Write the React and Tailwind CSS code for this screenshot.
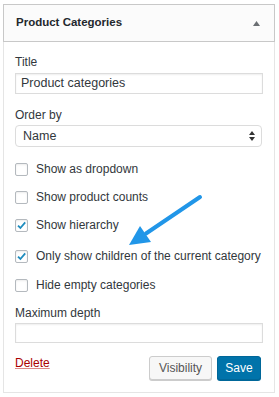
const font = { fontFamily: '"Liberation Sans", Arial, sans-serif' };

function Check({ checked }) {
    return (
        <span className="w-[13px] h-[13px] flex-none flex items-center justify-center border border-[#b4b9be] rounded-[2px] bg-white shadow-[inset_0_1px_2px_rgba(0,0,0,0.08)]">
            {checked && (
                <svg width="11" height="11" viewBox="0 0 11 11">
                    <path d="M2 5.6 L4.4 8 L9.2 2.4" fill="none" stroke="#1e8cbe" strokeWidth="1.8" />
                </svg>
            )}
        </span>
    );
}

function Row({ label, checked, className }) {
    return (
        <label className={"flex items-center gap-[8px] h-[16px] text-[12px] text-[#32373c] " + className}>
            <Check checked={checked} />
            <span>{label}</span>
        </label>
    );
}

export default function App() {
    return (
        <div className="relative w-[279px] h-[397px] bg-white" style={font}>
            <div className="ml-[3px] pt-[4px] w-[272px]">

                {/* Header */}
                <div className="h-[38px] border border-[#c8c8c8] bg-[#fbfbfb] flex items-center justify-between pl-[12px] pr-[14px]">
                    <span className="text-[11.5px] font-bold text-[#23282d]">Product Categories</span>
                    <svg width="7" height="5" viewBox="0 0 7 5">
                        <path d="M0 5 L3.5 0 L7 5 Z" fill="#6b6f73" />
                    </svg>
                </div>

                {/* Body */}
                <div className="border-x border-b border-[#e5e5e5] px-[11px] pt-[12px] pb-[12px] flex flex-col">
                    <div className="h-[16px] leading-[16px] text-[12px] text-[#32373c]">Title</div>
                    <div className="mt-[3px] h-[21px] border border-[#dcdcdc] flex items-center px-[5px] text-[12.5px] text-[#32373c] shadow-[inset_0_1px_2px_rgba(0,0,0,0.07)]">
                        Product categories
                    </div>

                    <div className="mt-[13px] h-[16px] leading-[16px] text-[12px] text-[#32373c]">Order by</div>
                    <div className="mt-[2px] h-[22px] mr-[1px] border border-[#dcdcdc] rounded-[4px] flex items-center justify-between pl-[7px] pr-[6px] text-[12.5px] text-[#32373c] bg-white">
                        <span>Name</span>
                        <svg width="6" height="10" viewBox="0 0 6 10">
                            <path d="M0 4 L3 0 L6 4 Z M0 6 L3 10 L6 6 Z" fill="#333" />
                        </svg>
                    </div>

                    <Row label="Show as dropdown" className="mt-[14px]" />
                    <Row label="Show product counts" className="mt-[12px]" />
                    <Row label="Show hierarchy" checked className="mt-[12px]" />
                    <Row label="Only show children of the current category" checked className="mt-[15px]" />
                    <Row label="Hide empty categories" className="mt-[13px]" />

                    <div className="mt-[12px] h-[16px] leading-[16px] text-[12px] text-[#32373c]">Maximum depth</div>
                    <div className="mt-[2px] h-[20px] border border-[#dcdcdc] shadow-[inset_0_1px_2px_rgba(0,0,0,0.07)]" />

                    {/* Footer */}
                    <div className="mt-[13px] h-[24px] flex items-center justify-between">
                        <a className="text-[12px] text-[#a00] underline decoration-[#d88] -mt-[10px]">Delete</a>
                        <div className="flex gap-[5px] pr-[2px]">
                            <button className="h-[24px] w-[63px] border border-[#cccccc] rounded-[3px] bg-[#f7f7f7] text-[12px] text-[#555] shadow-[0_1px_0_#ccc]">
                                Visibility
                            </button>
                            <button className="h-[24px] w-[44px] border border-[#006799] rounded-[3px] bg-[#0073aa] text-[12px] text-white shadow-[0_1px_0_#006799]">
                                Save
                            </button>
                        </div>
                    </div>
                </div>
            </div>

            {/* Annotation arrow */}
            <svg className="absolute left-0 top-0 pointer-events-none" width="279" height="397" viewBox="0 0 279 397">
                <line x1="200" y1="197" x2="146" y2="233.5" stroke="#2196e8" strokeWidth="4" strokeLinecap="round" />
                <path d="M129 245 L151 242 L140 226 Z" fill="#2196e8" />
            </svg>
        </div>
    );
}
